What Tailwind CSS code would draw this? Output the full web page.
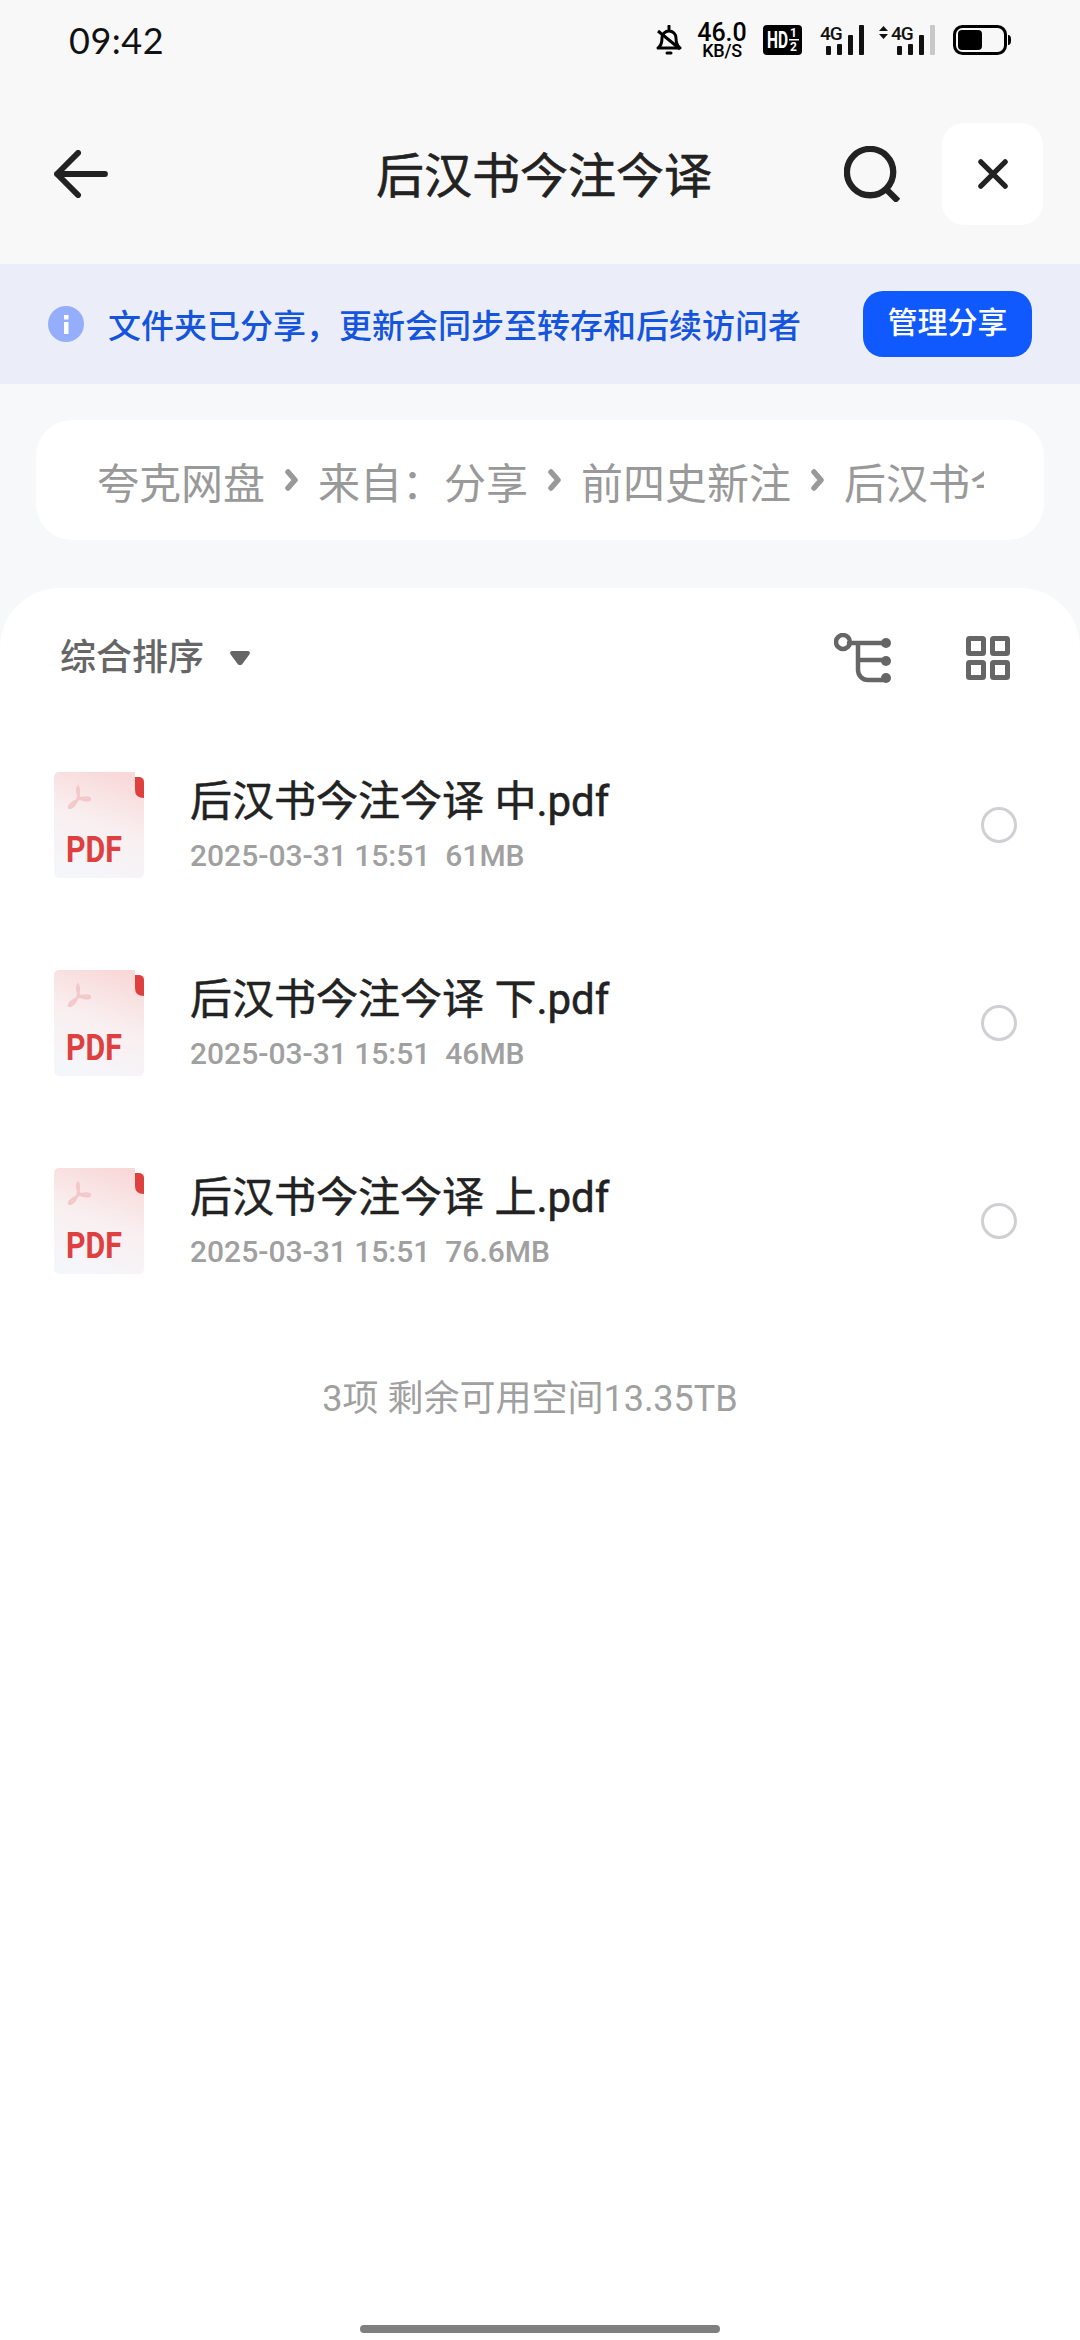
<!DOCTYPE html>
<html lang="zh-CN">
<head>
    <meta charset="UTF-8" />
    <meta name="viewport" content="width=device-width, initial-scale=1.0" />
    <title>后汉书今注今译</title>
    <script src="https://cdn.jsdelivr.net/npm/@tailwindcss/browser@4"></script>
</head>
<body class="w-[1080px] h-[2340px] overflow-hidden relative flex flex-col bg-[#f8f8f8] font-['Roboto','Noto_Sans_CJK_SC',sans-serif] text-[#222]">

    <!-- Status bar -->
    <div class="h-[80px] shrink-0 flex items-center justify-between pl-[69px] pr-[69px]">
        <span class="text-[36px] leading-none tracking-[0.5px] text-[#111] font-['Lato','Roboto',sans-serif]">09:42</span>
        <div class="flex items-center text-black">
            <svg class="w-[26px] h-[30px]" viewBox="0 0 26 30" fill="none" stroke="#000" stroke-width="3">
                <path d="M2 23c3-2 4-5 4-10a7 7 0 0 1 14 0c0 5 1 8 4 10z" stroke-linejoin="round" />
                <path d="M2 6l22 18" />
                <path d="M13 1v3M11 28h4" stroke-linecap="round" />
            </svg>
            <div class="w-[50px] ml-[15px] flex flex-col items-center font-medium">
                <span class="text-[25px] leading-[19px] h-[19px]">46.0</span>
                <span class="mt-[2px] text-[18px] leading-[14px] h-[14px] tracking-[-0.3px]">KB/S</span>
            </div>
            <svg class="ml-[16px] w-[39px] h-[30px]" viewBox="0 0 39 30">
                <rect width="39" height="30" rx="4" fill="#000" />
                <text x="4" y="23" font-size="23" font-weight="700" fill="#fff" textLength="21" lengthAdjust="spacingAndGlyphs" class="font-['Roboto',sans-serif]">HD</text>
                <text x="27" y="12" font-size="12" font-weight="700" fill="#fff" class="font-['Roboto',sans-serif]">1</text>
                <text x="27" y="26" font-size="12" font-weight="700" fill="#fff" class="font-['Roboto',sans-serif]">2</text>
                <rect x="26" y="14" width="10" height="1.500" fill="#fff" />
            </svg>
            <svg class="ml-[18px] w-[44px] h-[30px]" viewBox="0 0 44 30" fill="#111">
                <text x="0" y="15" font-size="19" font-weight="500" letter-spacing="-1" class="font-['Roboto',sans-serif]">4G</text>
                <rect x="6" y="21" width="5" height="9" rx="1" />
                <rect x="17" y="19" width="5" height="11" rx="1" />
                <rect x="28" y="10" width="5" height="20" rx="1" />
                <rect x="39" y="0" width="5" height="30" rx="1" />
            </svg>
            <svg class="ml-[15px] w-[56px] h-[30px]" viewBox="0 0 56 30" fill="#111">
                <path d="M0 6l4.500-5 4.500 5zM0 9l4.500 5 4.500-5z" />
                <text x="12" y="15" font-size="19" font-weight="500" letter-spacing="-1" class="font-['Roboto',sans-serif]">4G</text>
                <rect x="18" y="21" width="5" height="9" rx="1" />
                <rect x="29" y="19" width="5" height="11" rx="1" />
                <rect x="40" y="10" width="5" height="20" rx="1" />
                <rect x="51" y="0" width="5" height="30" rx="1" fill="#c8c8c8" />
            </svg>
            <svg class="ml-[18px] w-[58px] h-[30px]" viewBox="0 0 58 30">
                <rect x="1.500" y="1.500" width="51" height="27" rx="8" fill="none" stroke="#000" stroke-width="3" />
                <rect x="5" y="5" width="24" height="20" rx="4" fill="#000" />
                <path d="M55 10a3 4 0 0 1 3 4v2a3 4 0 0 1-3 4z" fill="#000" />
            </svg>
        </div>
    </div>

    <!-- Title bar -->
    <div class="h-[184px] shrink-0 flex items-center pl-[54px] pr-[37px] pt-[4px]">
        <svg class="w-[54px] h-[48px] shrink-0" viewBox="0 0 56 50" fill="none" stroke="#222" stroke-width="6" stroke-linecap="round" stroke-linejoin="round">
            <path d="M25 3L3 25l22 22M3 25h50" />
        </svg>
        <h1 class="ml-[268px] mt-[6px] text-[48px] leading-[60px] font-normal [-webkit-text-stroke:0.6px_#222]">后汉书今注今译</h1>
        <svg class="ml-auto w-[56px] h-[56px] shrink-0" viewBox="0 0 58 58" fill="none" stroke="#222" stroke-width="6.500">
            <circle cx="27" cy="27" r="24" />
            <path d="M44 45l12 12" />
        </svg>
        <div class="ml-[42px] w-[101px] h-[102px] shrink-0 bg-white rounded-[22px] flex items-center justify-center">
            <svg class="w-[30px] h-[30px]" viewBox="0 0 32 32" fill="none" stroke="#222" stroke-width="5.500" stroke-linecap="round">
                <path d="M3 3l26 26M29 3L3 29" />
            </svg>
        </div>
    </div>

    <!-- Share notice -->
    <div class="h-[120px] shrink-0 bg-[#ebeef8] flex items-center pl-[48px] pr-[48px]">
        <svg class="w-[36px] h-[36px] shrink-0" viewBox="0 0 36 36">
            <circle cx="18" cy="18" r="18" fill="#94aefb" />
            <rect x="16" y="9" width="4.500" height="4.500" fill="#fff" />
            <rect x="16" y="16" width="4.500" height="12" fill="#fff" />
        </svg>
        <span class="ml-[24px] pt-[4px] text-[33px] leading-none font-medium text-[#1554dd] whitespace-nowrap">文件夹已分享，更新会同步至转存和后续访问者</span>
        <button class="ml-auto w-[169px] h-[66px] shrink-0 bg-[#0f59ff] rounded-[20px] text-white text-[30px] font-medium leading-none pb-[2px]">管理分享</button>
    </div>

    <div class="flex-1 flex flex-col bg-[#f7f8fa]">
        <!-- Breadcrumb -->
        <div class="mt-[36px] mx-[36px] h-[120px] shrink-0 bg-white rounded-[36px] flex items-center pl-[61px] pr-[60px]">
            <div class="flex items-center w-full overflow-hidden whitespace-nowrap text-[42px] leading-[56px] text-[#999] pt-[9px]">
                <span class="shrink-0">夸克网盘</span>
                <svg class="shrink-0 mx-[20px] w-[13px] h-[22px] -mt-[10px]" viewBox="0 0 13 22" fill="none" stroke="#999" stroke-width="5.500" stroke-linecap="round" stroke-linejoin="round"><path d="M3 3l7 8-7 8" /></svg>
                <span class="shrink-0">来自：分享</span>
                <svg class="shrink-0 mx-[20px] w-[13px] h-[22px] -mt-[10px]" viewBox="0 0 13 22" fill="none" stroke="#999" stroke-width="5.500" stroke-linecap="round" stroke-linejoin="round"><path d="M3 3l7 8-7 8" /></svg>
                <span class="shrink-0">前四史新注</span>
                <svg class="shrink-0 mx-[20px] w-[13px] h-[22px] -mt-[10px]" viewBox="0 0 13 22" fill="none" stroke="#999" stroke-width="5.500" stroke-linecap="round" stroke-linejoin="round"><path d="M3 3l7 8-7 8" /></svg>
                <span class="shrink-0">后汉书今注今译</span>
            </div>
        </div>

        <!-- File panel -->
        <div class="mt-[48px] flex-1 bg-white rounded-t-[60px] relative">
            <div class="h-[140px] flex items-center pl-[60px] pr-[70px]">
                <span class="text-[36px] leading-none text-[#666] font-medium">综合排序</span>
                <svg class="ml-[26px] w-[20px] h-[14px]" viewBox="0 0 20 14"><path d="M2 0h16a2 2 0 0 1 1.500 3.200l-7 9.500a3 3 0 0 1-5 0l-7-9.500A2 2 0 0 1 2 0z" fill="#666" /></svg>
                <svg class="ml-auto w-[58px] h-[50px]" viewBox="0 0 58 50" fill="none" stroke="#666" stroke-width="4.500" stroke-linecap="round">
                    <circle cx="9" cy="9" r="7" />
                    <path d="M15 10h38M24 11v26a10 10 0 0 0 10 10h19M24 27h29" />
                    <circle cx="52" cy="10" r="5" fill="#666" stroke="none" />
                    <circle cx="52" cy="28" r="5" fill="#666" stroke="none" />
                    <circle cx="52" cy="45" r="5" fill="#666" stroke="none" />
                </svg>
                <svg class="ml-[74px] w-[44px] h-[44px]" viewBox="0 0 44 44" fill="none" stroke="#666" stroke-width="5" stroke-linejoin="round">
                    <rect x="2.500" y="2.500" width="15" height="15" rx="1" />
                    <rect x="26.500" y="2.500" width="15" height="15" rx="1" />
                    <rect x="2.500" y="26.500" width="15" height="15" rx="1" />
                    <rect x="26.500" y="26.500" width="15" height="15" rx="1" />
                </svg>
            </div>

            <ul class="-mt-[2px]">
                <li class="h-[198px] flex items-center pl-[54px] pr-[63px]">
                    <svg class="w-[90px] h-[106px] shrink-0" viewBox="0 0 90 106">
                        <defs>
                            <linearGradient id="pdfBg" x1="0.7" y1="0" x2="0.4" y2="1">
                                <stop offset="0" stop-color="#f9d8d8" />
                                <stop offset="0.5" stop-color="#f9eff0" />
                                <stop offset="1" stop-color="#f5f6fa" />
                            </linearGradient>
                        </defs>
                        <rect width="90" height="106" rx="5" fill="url(#pdfBg)" />
                        <rect x="81" width="9" height="6" fill="#fff" />
                        <path d="M81 5h4a5 5 0 0 1 5 5v16q-9 0-9-8z" fill="#de3f3f" />
                        <path d="M24 15c-2 3 0 10 3 12 2 1.500 9 2 9 0s-7-2-11 0c-4 2-10 6-10 8s4 0 6-3c3-4 5-13 3-17z" fill="none" stroke="#f3c8ca" stroke-width="2.500" />
                        <text x="12" y="90" font-size="36" font-weight="700" fill="#de3f3f" textLength="56" lengthAdjust="spacingAndGlyphs" class="font-['Roboto',sans-serif]">PDF</text>
                    </svg>
                    <div class="ml-[46px] flex-1">
                        <p class="text-[42px] leading-[52px] font-normal text-[#222] [-webkit-text-stroke:0.5px_#222]">后汉书今注今译 中.pdf</p>
                        <p class="mt-[10px] text-[30px] leading-[36px] font-medium text-[#a0a0a0]">2025-03-31 15:51&nbsp;&nbsp;61MB</p>
                    </div>
                    <span class="w-[36px] h-[36px] rounded-full border-[3px] border-[#d0d0d4]"></span>
                </li>
                <li class="h-[198px] flex items-center pl-[54px] pr-[63px]">
                    <svg class="w-[90px] h-[106px] shrink-0" viewBox="0 0 90 106">
                        <rect width="90" height="106" rx="5" fill="url(#pdfBg)" />
                        <rect x="81" width="9" height="6" fill="#fff" />
                        <path d="M81 5h4a5 5 0 0 1 5 5v16q-9 0-9-8z" fill="#de3f3f" />
                        <path d="M24 15c-2 3 0 10 3 12 2 1.500 9 2 9 0s-7-2-11 0c-4 2-10 6-10 8s4 0 6-3c3-4 5-13 3-17z" fill="none" stroke="#f3c8ca" stroke-width="2.500" />
                        <text x="12" y="90" font-size="36" font-weight="700" fill="#de3f3f" textLength="56" lengthAdjust="spacingAndGlyphs" class="font-['Roboto',sans-serif]">PDF</text>
                    </svg>
                    <div class="ml-[46px] flex-1">
                        <p class="text-[42px] leading-[52px] font-normal text-[#222] [-webkit-text-stroke:0.5px_#222]">后汉书今注今译 下.pdf</p>
                        <p class="mt-[10px] text-[30px] leading-[36px] font-medium text-[#a0a0a0]">2025-03-31 15:51&nbsp;&nbsp;46MB</p>
                    </div>
                    <span class="w-[36px] h-[36px] rounded-full border-[3px] border-[#d0d0d4]"></span>
                </li>
                <li class="h-[198px] flex items-center pl-[54px] pr-[63px]">
                    <svg class="w-[90px] h-[106px] shrink-0" viewBox="0 0 90 106">
                        <rect width="90" height="106" rx="5" fill="url(#pdfBg)" />
                        <rect x="81" width="9" height="6" fill="#fff" />
                        <path d="M81 5h4a5 5 0 0 1 5 5v16q-9 0-9-8z" fill="#de3f3f" />
                        <path d="M24 15c-2 3 0 10 3 12 2 1.500 9 2 9 0s-7-2-11 0c-4 2-10 6-10 8s4 0 6-3c3-4 5-13 3-17z" fill="none" stroke="#f3c8ca" stroke-width="2.500" />
                        <text x="12" y="90" font-size="36" font-weight="700" fill="#de3f3f" textLength="56" lengthAdjust="spacingAndGlyphs" class="font-['Roboto',sans-serif]">PDF</text>
                    </svg>
                    <div class="ml-[46px] flex-1">
                        <p class="text-[42px] leading-[52px] font-normal text-[#222] [-webkit-text-stroke:0.5px_#222]">后汉书今注今译 上.pdf</p>
                        <p class="mt-[10px] text-[30px] leading-[36px] font-medium text-[#a0a0a0]">2025-03-31 15:51&nbsp;&nbsp;76.6MB</p>
                    </div>
                    <span class="w-[36px] h-[36px] rounded-full border-[3px] border-[#d0d0d4]"></span>
                </li>
            </ul>

            <p class="mt-[56px] text-center text-[36px] leading-[46px] text-[#a0a0a0] pr-[20px]">3项 剩余可用空间13.35TB</p>

            <!-- Home indicator -->
            <div class="absolute bottom-[7px] left-[360px] w-[360px] h-[8px] rounded-full bg-[#808080]"></div>
        </div>
    </div>
</body>
</html>
